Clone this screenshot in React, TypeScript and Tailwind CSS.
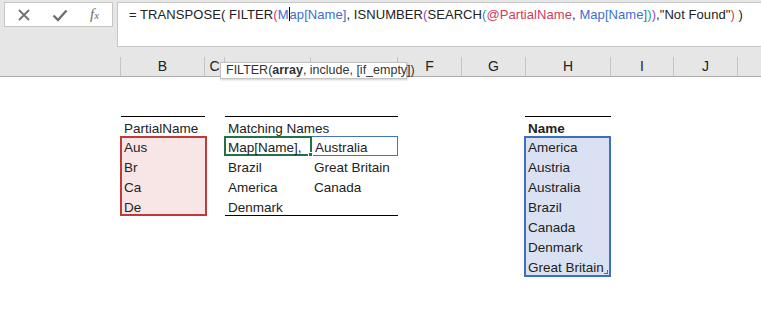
import React from 'react';

const cols = [
  { w: 121, l: '' },
  { w: 84, l: 'B' },
  { w: 20, l: 'C' },
  { w: 86, l: '' },
  { w: 87, l: '' },
  { w: 64, l: 'F' },
  { w: 64, l: 'G' },
  { w: 85, l: 'H' },
  { w: 63, l: 'I' },
  { w: 64, l: 'J' },
];

const partial = ['Aus', 'Br', 'Ca', 'De'];
const matches: [string, string][] = [
  ['Brazil', 'Great Britain'],
  ['America', 'Canada'],
  ['Denmark', ''],
];
const names = ['America', 'Austria', 'Australia', 'Brazil', 'Canada', 'Denmark', 'Great Britain'];

function FormulaBar() {
  return (
    <div className="flex pt-[2px] pl-[4px] h-[47px]">
      <div className="w-[109px] shrink-0 h-[25px] bg-white border border-[#c6c6c6] flex items-center">
        <svg width="14" height="14" viewBox="0 0 14 14" className="ml-[12px]">
          <path d="M2 2 L12 12 M12 2 L2 12" stroke="#707070" strokeWidth="1.8" />
        </svg>
        <svg width="16" height="14" viewBox="0 0 16 14" className="ml-[21px]">
          <path d="M1.5 7.5 L6 12 L14.5 2.5" stroke="#707070" strokeWidth="2.4" fill="none" />
        </svg>
        <span
          className="ml-[22px] italic text-[15px] leading-none text-[#6e6e6e]"
          style={{ fontFamily: "'Liberation Serif', serif" }}
        >
          f<span className="text-[11px]">x</span>
        </span>
      </div>
      <div className="ml-[4px] flex-1 min-w-0 h-[45px] bg-white border border-r-0 border-[#c6c6c6] pl-[11px] pt-[2px] text-[13px] tracking-[0.07px] leading-[20px] text-[#222] whitespace-nowrap overflow-hidden">
        <span>= TRANSPOSE( FILTER</span>
        <span className="text-[#e0356f]">(</span>
        <span className="text-[#3d6fce]">M</span>
        <span className="inline-block w-px h-[14px] bg-black align-[-2px]" />
        <span className="text-[#3d6fce]">ap[Name]</span>
        <span>, ISNUMBER</span>
        <span className="text-[#9a47c4]">(</span>
        <span>SEARCH</span>
        <span className="text-[#1f9e7a]">(</span>
        <span className="text-[#d03a5c]">@PartialName</span>
        <span>, </span>
        <span className="text-[#3d6fce]">Map[Name]</span>
        <span className="text-[#1f9e7a]">)</span>
        <span className="text-[#9a47c4]">)</span>
        <span>,"Not Found"</span>
        <span className="text-[#e0356f]">)</span>
        <span> )</span>
      </div>
    </div>
  );
}

function Headers() {
  return (
    <div className="relative mt-[10px] flex h-[20px] border-b border-[#ababab]">
      {cols.map((c, i) => (
        <div
          key={i}
          className="h-[19px] border-r border-[#c4c4c4] flex items-center justify-center text-[14px] text-[#222] shrink-0"
          style={{ width: c.w }}
        >
          {c.l}
        </div>
      ))}
      <div className="absolute left-[220px] top-[5px] w-[187px] h-[17px] bg-white border border-[#c2c2c2] shadow-[1px_1px_2px_rgba(0,0,0,0.2)] pl-[5px] text-[12.5px] leading-[15px] text-[#333] whitespace-nowrap z-10">
        FILTER(<b>array</b>, include, [if_empty])
      </div>
    </div>
  );
}

export default function App() {
  return (
    <div
      className="w-[761px] h-[309px] overflow-hidden bg-white text-[#222]"
      style={{ fontFamily: "'Liberation Sans', Arial, sans-serif" }}
    >
      <div className="bg-[#e6e6e6]">
        <FormulaBar />
        <Headers />
      </div>

      <div className="flex pt-[39px] text-[13.5px] leading-[24px]">
        {/* B: PartialName */}
        <div className="ml-[121px] w-[84px] shrink-0">
          <div className="h-[20px] border-t border-black px-[3px]">PartialName</div>
          <div className="-ml-px w-[87px] h-[80px] border-2 border-[#c0393b] bg-[#f8e6e7] pl-[2px]">
            <div className="-mt-[2px]">
              {partial.map((p) => (
                <div key={p} className="h-[20px]">{p}</div>
              ))}
            </div>
          </div>
        </div>

        {/* D:E Matching Names */}
        <div className="ml-[20px] w-[173px] shrink-0">
          <div className="h-[20px] border-t border-black px-[3px]">Matching Names</div>
          <div className="flex h-[20px]">
            <div className="relative w-[88px] -ml-px border-2 border-[#217346] pl-[2px] leading-[20px]">
              Map[Name],
              <span className="absolute -right-[3px] -bottom-[3px] w-[5px] h-[5px] bg-[#217346] border border-white" />
            </div>
            <div className="flex-1 border border-l-0 border-[#4472c4] pl-[3px] leading-[22px]">Australia</div>
          </div>
          {matches.map(([a, b], i) => (
            <div key={i} className={`flex h-[20px] ${i === matches.length - 1 ? 'border-b border-black' : ''}`}>
              <div className="w-[86px] px-[3px] h-[20px]">{a}</div>
              <div className="flex-1 px-[3px] h-[20px]">{b}</div>
            </div>
          ))}
        </div>

        {/* H: Name */}
        <div className="ml-[127px] w-[86px] shrink-0">
          <div className="h-[20px] border-t border-black px-[3px] font-bold">Name</div>
          <div className="relative -ml-px w-[87px] h-[141px] border-2 border-[#3a6fc4] bg-[#d9e1f2] pl-[2px]">
            <div className="-mt-[2px]">
              {names.map((n) => (
                <div key={n} className="h-[20px]">{n}</div>
              ))}
            </div>
            <span className="absolute right-[1px] bottom-[1px] w-[4px] h-[4px] border-r border-b border-[#3a6fc4]" />
          </div>
        </div>
      </div>
    </div>
  );
}
